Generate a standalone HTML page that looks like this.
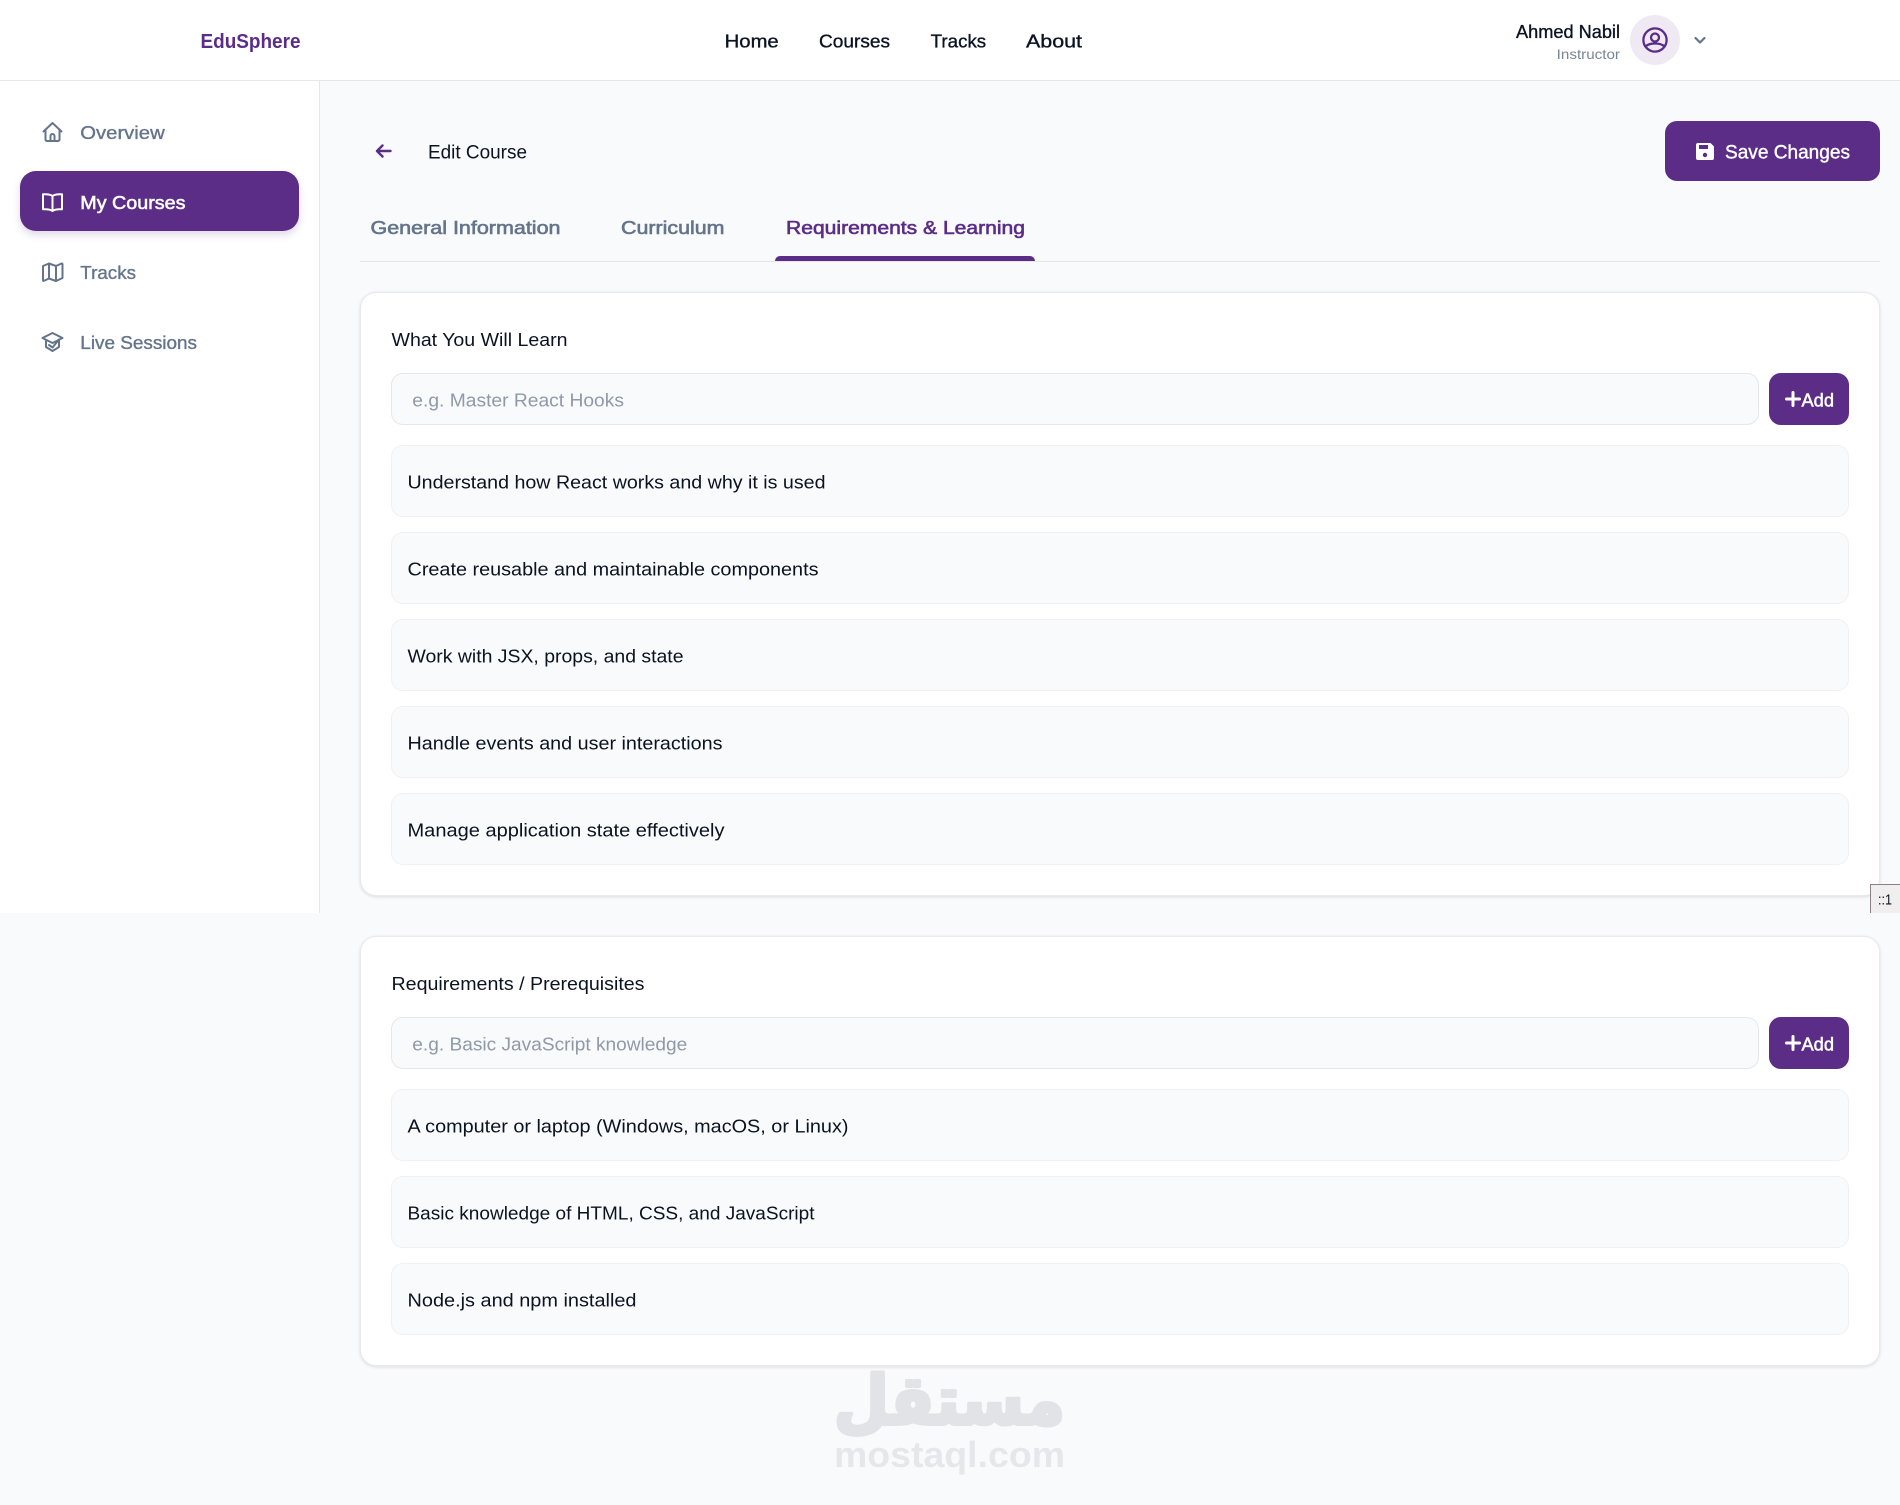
<!DOCTYPE html>
<html lang="en">
<head>
<meta charset="utf-8">
<title>EduSphere - Edit Course</title>
<style>
html,body{margin:0;padding:0;background:#f9fafc;}
body{position:relative;width:1900px;height:1505px;overflow:hidden;font-family:"Liberation Sans",sans-serif;}
.b{position:absolute;box-sizing:border-box;}
.header{left:0;top:0;width:1900px;height:81px;background:#fff;border-bottom:1px solid #e5e7eb;}
.side{left:0;top:81px;width:320px;height:832px;background:#fff;border-right:1px solid #e5e7eb;}
.pill{left:20px;top:171px;width:279px;height:60px;background:#5b2d87;border-radius:16px;box-shadow:0 4px 8px rgba(91,45,135,.18);}
.save{left:1665px;top:121px;width:215px;height:60px;background:#5b2d87;border-radius:12px;}
.line{left:360px;top:261px;width:1520px;height:1px;background:#e5e7eb;}
.ul{left:775px;top:256px;width:260px;height:5px;background:#5b2d87;border-radius:5px 5px 0 0;}
.card{left:360px;width:1520px;background:#fff;border:1px solid #e8e9ed;border-radius:16px;box-shadow:0 1px 3px rgba(0,0,0,.12);}
.input{left:391px;width:1368px;height:52px;background:#f9fafc;border:1px solid #e5e7eb;border-radius:12px;}
.add{left:1769px;width:80px;height:52px;background:#5b2d87;border-radius:12px;}
.item{left:391px;width:1458px;height:72px;background:#f9fafc;border:1px solid #f0f1f4;border-radius:12px;}
.badge{left:1870px;top:884px;width:30px;height:29px;background:#f0eeee;border:1px solid #8d8085;border-right:0;border-bottom:0;}
svg.o{position:absolute;left:0;top:0;}
text{font-family:"Liberation Sans",sans-serif;font-size:18px;fill:#0b1220;}
.m{stroke:currentColor;stroke-width:.35px;}
.g{fill:#64748b;color:#64748b;}
.d{color:#0f172a;}
.w{fill:#fff;color:#fff;}
.p{fill:#5b2d87;color:#5b2d87;}
.ph{fill:#8f99a8;}
.i{fill:none;stroke-width:2;stroke-linecap:round;stroke-linejoin:round;}
</style>
</head>
<body>
<div class="b header"></div>
<div class="b side"></div>
<div class="b pill"></div>
<div class="b save"></div>
<div class="b line"></div>
<div class="b ul"></div>

<div class="b card" style="top:292px;height:604px"></div>
<div class="b input" style="top:373px"></div>
<div class="b add" style="top:373px"></div>
<div class="b item" style="top:445px"></div>
<div class="b item" style="top:532px"></div>
<div class="b item" style="top:619px"></div>
<div class="b item" style="top:706px"></div>
<div class="b item" style="top:793px"></div>

<div class="b card" style="top:936px;height:430px"></div>
<div class="b input" style="top:1017px"></div>
<div class="b add" style="top:1017px"></div>
<div class="b item" style="top:1089px"></div>
<div class="b item" style="top:1176px"></div>
<div class="b item" style="top:1263px"></div>
<div class="b badge"></div>

<svg class="o" width="1900" height="1505" viewBox="0 0 1900 1505" xmlns="http://www.w3.org/2000/svg">
  <!-- header -->
  <text x="200.500" y="48" textLength="100" lengthAdjust="spacingAndGlyphs" class="p" style="font-size:20px;font-weight:700">EduSphere</text>
  <text x="724.700" y="47.500" textLength="54" lengthAdjust="spacingAndGlyphs" class="m d">Home</text>
  <text x="819" y="47.500" textLength="71" lengthAdjust="spacingAndGlyphs" class="m d">Courses</text>
  <text x="930.700" y="47.500" textLength="55.500" lengthAdjust="spacingAndGlyphs" class="m d">Tracks</text>
  <text x="1026" y="47.500" textLength="56" lengthAdjust="spacingAndGlyphs" class="m d">About</text>
  <text x="1516" y="38" textLength="104" lengthAdjust="spacingAndGlyphs" class="m d">Ahmed Nabil</text>
  <text x="1556.700" y="59" textLength="63.300" lengthAdjust="spacingAndGlyphs" style="font-size:14px;fill:#7a8594">Instructor</text>
  <circle cx="1655" cy="40" r="25" fill="#efe9f4"/>
  <g class="i" stroke="#5b2d87" style="stroke-width:2.300">
    <circle cx="1655" cy="40" r="11.600"/>
    <circle cx="1655" cy="37.500" r="4"/>
    <path d="M1645.500 46.500c2.200-2.200 5.600-3 9.500-3s7.300.8 9.500 3"/>
  </g>
  <path d="M1695.500 38l4.500 4.500 4.500-4.500" fill="none" stroke="#64748b" stroke-width="2.200" stroke-linecap="round" stroke-linejoin="round"/>

  <!-- sidebar -->
  <g class="i" stroke="#64748b" transform="translate(41,120)">
    <path d="M2.500 11.500 11.500 3l9 8.500"/>
    <path d="M4.500 9.500V19.500a1.500 1.500 0 0 0 1.500 1.500h11a1.500 1.500 0 0 0 1.500-1.500V9.500"/>
    <path d="M9.500 21v-5a2 2 0 0 1 4 0v5"/>
  </g>
  <text x="80.300" y="139" textLength="84.400" lengthAdjust="spacingAndGlyphs" class="m g">Overview</text>

  <g class="i" stroke="#fff" transform="translate(41,190)">
    <path d="M11.500 6C9.500 4.500 6.500 4 2 4.300v15c4.500-.3 7.500.2 9.500 1.700 2-1.500 5-2 9.500-1.700v-15C16.500 4 13.500 4.500 11.500 6z"/>
    <path d="M11.500 6v15"/>
  </g>
  <text x="80.300" y="209" textLength="105.200" lengthAdjust="spacingAndGlyphs" class="m w" style="stroke-width:.55px">My Courses</text>

  <g class="i" stroke="#64748b" transform="translate(41,260)">
    <path d="M2 6 8 3.500l7 2.500 5.500-2.500a1 1 0 0 1 1 .5V18l-6.500 3-7-2.500L2.500 21a1 1 0 0 1-.5-1z" />
    <path d="M8 3.500v15M15 6v15"/>
  </g>
  <text x="80.300" y="279" textLength="55.700" lengthAdjust="spacingAndGlyphs" class="m g">Tracks</text>

  <g class="i" stroke="#64748b" transform="translate(41,330)">
    <path d="M11.500 3 1.500 8l10 5 10-5z"/>
    <path d="M5 10.500V17l6.500 4 6.500-4v-6.500"/>
    <path d="M8 15l3.500 2.500L18 9.500"/>
  </g>
  <text x="80.300" y="349" textLength="116.700" lengthAdjust="spacingAndGlyphs" class="m g">Live Sessions</text>

  <!-- page head -->
  <path d="M390.500 151h-13.500M382.500 145.500 377 151l5.500 5.500" fill="none" stroke="#5b2d87" stroke-width="2.400" stroke-linecap="round" stroke-linejoin="round"/>
  <text x="428" y="158.500" textLength="99" lengthAdjust="spacingAndGlyphs" style="font-size:19px">Edit Course</text>

  <path d="M1698 143h12.500l3.500 3.500V158a2 2 0 0 1-2 2h-14a2 2 0 0 1-2-2v-13a2 2 0 0 1 2-2z" fill="#fff"/>
  <rect x="1699" y="145" width="9" height="4" fill="#5b2d87"/>
  <circle cx="1705" cy="155" r="2.200" fill="#5b2d87"/>
  <text x="1725" y="158.500" textLength="125" lengthAdjust="spacingAndGlyphs" class="m w" style="font-size:19px;stroke-width:.4px">Save Changes</text>

  <!-- tabs -->
  <text x="370.500" y="234" textLength="190" lengthAdjust="spacingAndGlyphs" class="g m" style="stroke-width:.6px">General Information</text>
  <text x="621" y="234" textLength="103.500" lengthAdjust="spacingAndGlyphs" class="g m" style="stroke-width:.6px">Curriculum</text>
  <text x="786" y="234" textLength="239" lengthAdjust="spacingAndGlyphs" class="p m" style="stroke-width:.6px">Requirements &amp; Learning</text>

  <!-- card 1 -->
  <text x="391.500" y="346" textLength="176" lengthAdjust="spacingAndGlyphs">What You Will Learn</text>
  <text x="412.300" y="406.500" textLength="211.700" lengthAdjust="spacingAndGlyphs" class="ph">e.g. Master React Hooks</text>
  <path d="M1793 392.500v13M1786.500 399h13" stroke="#fff" stroke-width="3" stroke-linecap="round"/>
  <text x="1801.500" y="406.500" textLength="32.500" lengthAdjust="spacingAndGlyphs" class="m w" style="stroke-width:.5px">Add</text>
  <text x="407.500" y="488.500" textLength="418" lengthAdjust="spacingAndGlyphs">Understand how React works and why it is used</text>
  <text x="407.500" y="575.500" textLength="411" lengthAdjust="spacingAndGlyphs">Create reusable and maintainable components</text>
  <text x="407.500" y="662.500" textLength="276" lengthAdjust="spacingAndGlyphs">Work with JSX, props, and state</text>
  <text x="407.500" y="749.500" textLength="315" lengthAdjust="spacingAndGlyphs">Handle events and user interactions</text>
  <text x="407.500" y="836.500" textLength="317" lengthAdjust="spacingAndGlyphs">Manage application state effectively</text>

  <!-- card 2 -->
  <text x="391.500" y="990" textLength="253" lengthAdjust="spacingAndGlyphs">Requirements / Prerequisites</text>
  <text x="412.300" y="1050.500" textLength="275" lengthAdjust="spacingAndGlyphs" class="ph">e.g. Basic JavaScript knowledge</text>
  <path d="M1793 1036.500v13M1786.500 1043h13" stroke="#fff" stroke-width="3" stroke-linecap="round"/>
  <text x="1801.500" y="1050.500" textLength="32.500" lengthAdjust="spacingAndGlyphs" class="m w" style="stroke-width:.5px">Add</text>
  <text x="407.500" y="1132.500" textLength="441" lengthAdjust="spacingAndGlyphs">A computer or laptop (Windows, macOS, or Linux)</text>
  <text x="407.500" y="1219.500" textLength="407" lengthAdjust="spacingAndGlyphs">Basic knowledge of HTML, CSS, and JavaScript</text>
  <text x="407.500" y="1306.500" textLength="229" lengthAdjust="spacingAndGlyphs">Node.js and npm installed</text>

  <!-- badge -->
  <text x="1878" y="904.500" textLength="14" lengthAdjust="spacingAndGlyphs" style="font-size:15px">::1</text>

  <!-- watermark -->
  <text x="834" y="1424" textLength="231" lengthAdjust="spacingAndGlyphs" style="font-family:'DejaVu Sans',sans-serif;font-weight:700;font-size:68px;fill:#e2e3e6;stroke:#e2e3e6;stroke-width:4px;stroke-linejoin:round" direction="rtl" text-anchor="end">مستقل</text>
  <text x="834" y="1467" textLength="231" lengthAdjust="spacingAndGlyphs" style="font-weight:700;font-size:36px;fill:#e6e7ea">mostaql.com</text>
</svg>
</body>
</html>
